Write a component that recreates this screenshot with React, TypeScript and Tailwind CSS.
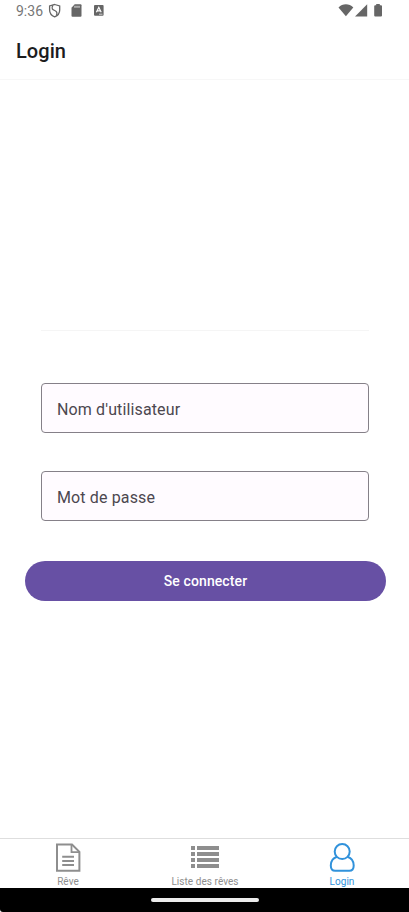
import React from 'react';

function StatusBar() {
  return (
    <div className="flex h-[22px] items-start justify-between pl-4 pr-[26px] text-[#666666]">
      <div className="flex items-start">
        <span className="w-[32px] pt-[2px] text-[14px] leading-[18px] text-[#777777]">9:36</span>
        <svg className="mt-[3px]" width="14" height="16" viewBox="0 0 14 16" fill="none" stroke="currentColor" strokeWidth="1.3">
          <path d="M6.700 1.500 11.700 3v4c0 3.400-2 5.700-5 6.800C3.800 12.700 1.600 10.400 1.600 7V3Z" />
          <path d="M5 2.200C2.800 5.800 4.800 6.800 6.700 7.500C9 8.500 9.500 10 8.300 12.700" />
        </svg>
        <svg className="ml-[9px] mt-[4px]" width="11" height="13" viewBox="0 0 11 13">
          <path fill="currentColor" d="M3.700.3h5.800q1 0 1 1v10.400q0 1-1 1h-8q-1 0-1-1V3.700Z" />
          <path stroke="#fff" strokeWidth=".9" d="M4 1.800v2M6 1.800v2M8 1.800v2" />
        </svg>
        <svg className="ml-[12px] mt-[5px]" width="10" height="11" viewBox="0 0 10 11">
          <rect width="9.600" height="10.800" rx="1" fill="currentColor" />
          <path fill="none" stroke="#fff" strokeWidth="1.200" d="m2.400 7.300 2.400-5 2.400 5M3.300 5.800h3" />
          <path stroke="#fff" strokeWidth=".7" d="M5 9.200h3.500" />
        </svg>
      </div>
      <svg className="mt-[3px]" width="45" height="14" viewBox="0 0 45 14" fill="currentColor">
        <path d="M.5 4.500C4.600.2 11.200.2 15.300 4.500L7.900 13.300Z" />
        <path d="M29.200 1.200v12.200H17Z" />
        <path d="M38.200 1h3.600v1.200h1.200q1 0 1 1v9.200q0 1-1 1h-5.800q-1 0-1-1V3.200q0-1 1-1h1Z" />
      </svg>
    </div>
  );
}

function Field({ label }: { label: string }) {
  return (
    <div className="ml-4 mr-[17px] flex h-[50px] items-center rounded-[4px] border border-[#858088] bg-[#fffbff] px-[15px] pt-[3px] text-[16px] tracking-[0.13px] text-[#4c474f]">
      {label}
    </div>
  );
}

function Tab({ label, active, children }: { label: string; active?: boolean; children: React.ReactNode }) {
  return (
    <div className={`flex w-[137px] shrink-0 flex-col items-center pt-[3px] ${active ? 'text-[#3192db]' : 'text-[#8e8e8e]'}`}>
      {children}
      <span className="mt-[2px] text-[10px] leading-[12px] tracking-[0.05px]">{label}</span>
    </div>
  );
}

export default function App() {
  return (
    <div className="flex h-[912px] w-[409px] flex-col overflow-hidden bg-white font-['Roboto','Noto_Sans',sans-serif]">
      <StatusBar />
      <header className="flex h-[58px] items-center border-b border-[#f7f7f7] pl-4 text-[20px] font-medium tracking-[0.05px] text-[#1c1c1e]">
        Login
      </header>
      <main className="flex flex-1 flex-col pl-[25px] pr-[23px]">
        <div className="ml-4 mr-[17px] mt-[250px] h-px bg-[#f5f5f5]" />
        <div className="mt-[52px] flex flex-col gap-[38px]">
          <Field label="Nom d'utilisateur" />
          <Field label="Mot de passe" />
        </div>
        <button className="mt-[40px] h-[40px] rounded-full bg-[#6750a4] text-[14px] font-medium tracking-[0.1px] text-white">
          Se connecter
        </button>
      </main>
      <nav className="flex h-[50px] justify-center border-t border-[#dedede] pl-px">
        <Tab label="Rêve">
          <svg width="30" height="32" viewBox="0 0 30 32" fill="none" stroke="currentColor" strokeWidth="2">
            <path d="M4 2.600H19l7.400 7.200v19H4Z" />
            <path d="M18.500 3v7.200h7.600" strokeWidth="1.800" />
            <path d="M9.200 14.800h11.800M9.200 18.900h11.800M9.200 23h11.800" />
          </svg>
        </Tab>
        <Tab label="Liste des rêves">
          <svg width="30" height="32" viewBox="0 0 30 32" fill="currentColor">
            <path d="M1 4h4v4H1zM7 4h22v4H7zM1 10h4v4H1zM7 10h22v4H7zM1 16h4v4H1zM7 16h22v4H7zM1 22h4v4H1zM7 22h22v4H7z" />
          </svg>
        </Tab>
        <Tab label="Login" active>
          <svg width="30" height="32" viewBox="0 0 30 32" fill="none" stroke="currentColor" strokeWidth="2">
            <circle cx="15.200" cy="9.600" r="7.500" />
            <path d="M10 14.700C6 16 3.800 19 3.800 23.500C3.800 27 5.200 28.800 8.200 28.800H22.300C25.300 28.800 26.700 27 26.700 23.500C26.700 19 24.500 16 20.500 14.700" />
          </svg>
        </Tab>
      </nav>
      <div className="flex h-[24px] items-center justify-center rounded-bl-[3px] bg-black">
        <div className="h-[4px] w-[108px] rounded-full bg-[#ececec]" />
      </div>
    </div>
  );
}
